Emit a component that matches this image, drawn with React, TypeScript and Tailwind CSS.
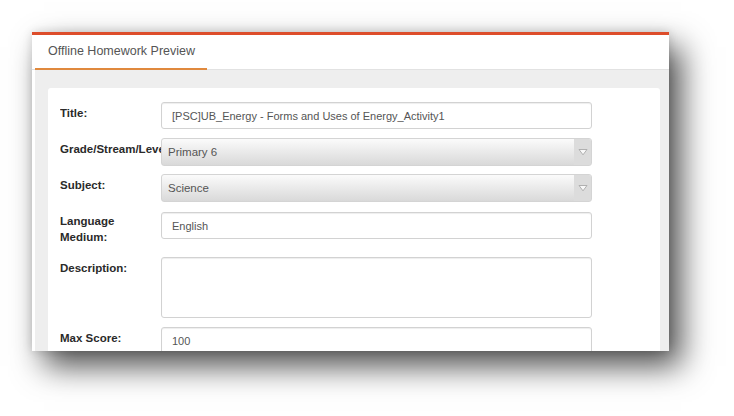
type Row = {
  label: string
  value?: string
  kind: "input" | "select" | "textarea"
  h: string
  mb: string
}

const rows: Row[] = [
  { label: "Title:", value: "[PSC]UB_Energy - Forms and Uses of Energy_Activity1", kind: "input", h: "h-[27px]", mb: "mb-[9px]" },
  { label: "Grade/Stream/Level:", value: "Primary 6", kind: "select", h: "h-[28px]", mb: "mb-[8px]" },
  { label: "Subject:", value: "Science", kind: "select", h: "h-[28px]", mb: "mb-[10px]" },
  { label: "Language Medium:", value: "English", kind: "input", h: "h-[27px]", mb: "mb-[18px]" },
  { label: "Description:", kind: "textarea", h: "h-[61px]", mb: "mb-[9px]" },
  { label: "Max Score:", value: "100", kind: "input", h: "h-[27px]", mb: "mb-0" },
]

const Arrow = () => (
  <svg width="10" height="8" viewBox="0 0 10 8">
    <path d="M1 1.5 L9 1.5 L5 6.8 Z" fill="#f8f8f8" stroke="#a9a9a9" strokeWidth="0.9" strokeLinejoin="round" />
  </svg>
)

const Field = ({ row }: { row: Row }) => {
  if (row.kind === "select") {
    return (
      <div
        className={`flex w-[431px] ${row.h} rounded-[3px] border border-[#d4d4d4] bg-gradient-to-b from-[#fbfbfb] to-[#d9d9d9] overflow-hidden`}
      >
        <div className="flex-1 flex items-center pl-[6px] pt-[1px] text-[11.5px] text-[#555]">
          {row.value}
        </div>
        <div className="w-[17px] flex items-center justify-center bg-[#dcdcdc]">
          <Arrow />
        </div>
      </div>
    )
  }
  return (
    <div
      className={`w-[431px] ${row.h} rounded-[3px] border border-[#d2d2d2] bg-white flex ${
        row.kind === "textarea" ? "items-start" : "items-center"
      } pl-[10px] pt-[1px] text-[11px] text-[#555] shadow-[inset_0_1px_1px_rgba(0,0,0,0.07)]`}
    >
      {row.value}
    </div>
  )
}

export default function App() {
  return (
    <div
      className="min-h-[416px] bg-white pt-[32px] pl-[32px]"
      style={{ fontFamily: '"Liberation Sans", Arial, sans-serif' }}
    >
      <div className="w-[637px] h-[319px] overflow-hidden bg-white border-t-[3px] border-[#dd4d2b] shadow-[12px_15px_30px_rgba(0,0,0,0.7),0_0_9px_rgba(0,0,0,0.14)]">
        <div className="h-[35px] flex items-end border-b border-[#e2e2e2] pl-[3px]">
          <div className="w-[172px] h-full flex items-center pl-[13px] pb-[1px] border-b-2 border-[#e0893d] -mb-[1px] text-[12.5px] text-[#555]">
            Offline Homework Preview
          </div>
        </div>
        <div className="h-full bg-[#eeeeee] border-l-[3px] border-white pl-[13px] pr-[9px] pt-[18px]">
          <div className="h-full bg-white rounded-[3px] pl-[12px] pt-[14px]">
            {rows.map((row) => (
              <div key={row.label} className={`flex items-start ${row.mb}`}>
                <div
                  className={`w-[101px] shrink-0 overflow-hidden text-[11.5px] font-bold leading-[16px] text-[#2a2a2a] ${
                    row.label === "Language Medium:" ? "pt-[1px] h-[45px] -mb-[18px]" : "whitespace-nowrap pt-[3px]"
                  }`}
                >
                  {row.label === "Language Medium:" ? (
                    <>
                      Language
                      <br />
                      Medium:
                    </>
                  ) : (
                    row.label
                  )}
                </div>
                <Field row={row} />
              </div>
            ))}
          </div>
        </div>
      </div>
    </div>
  )
}
